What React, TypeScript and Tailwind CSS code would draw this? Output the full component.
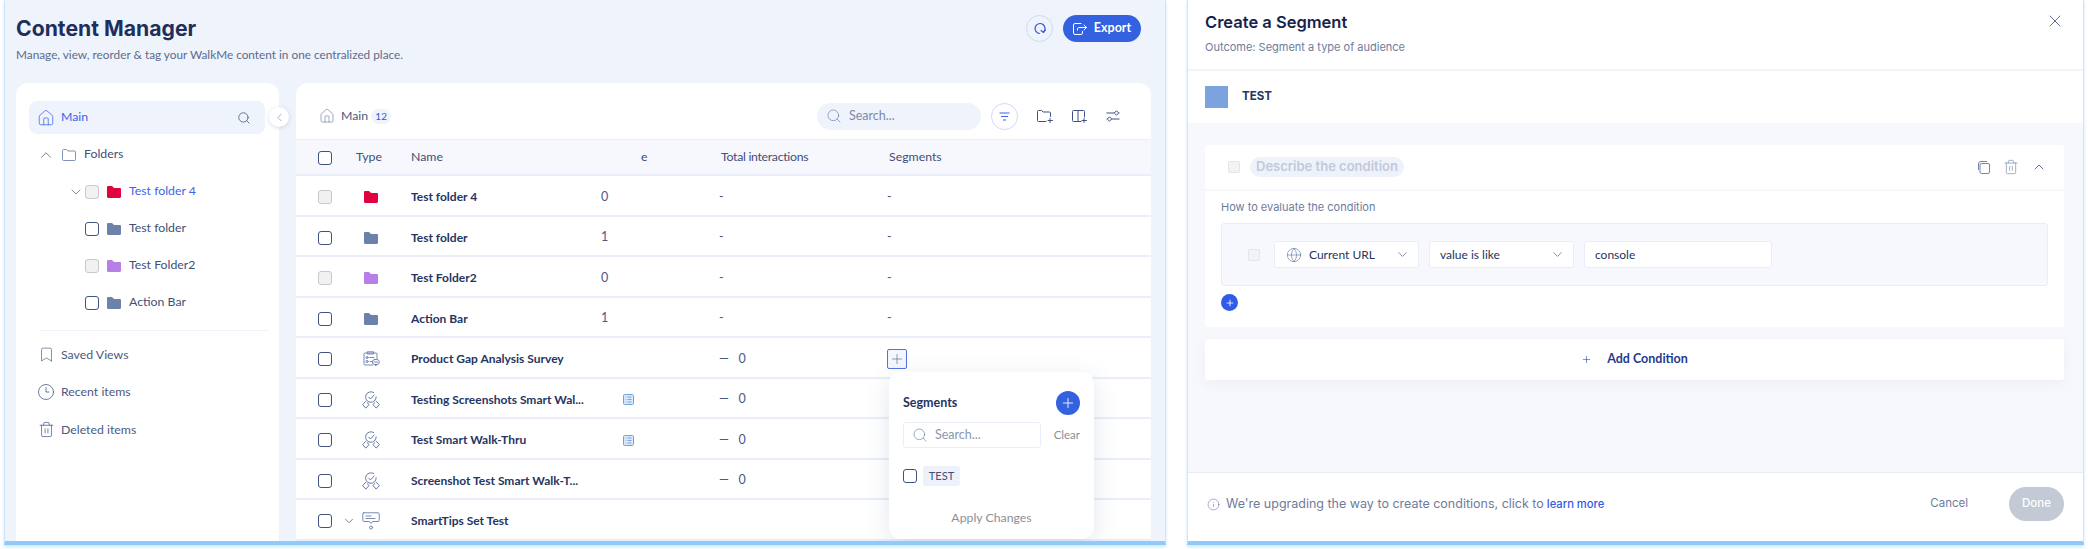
import React from "react";
import { House, Search, ChevronLeft, ChevronUp, ChevronDown, Bookmark, Clock3, Trash2, Plus, Globe, X, Info } from "lucide-react";

const body = "font-['Lato','Noto_Sans',sans-serif]";
const head = "font-['Inter','Noto_Sans',sans-serif]";

function FolderFill({ c }: { c: string }) {
  return (
    <svg width="14" height="12" viewBox="0 0 14 12" className="shrink-0">
      <path d="M0 1.2C0 .5.5 0 1.2 0h3.4c.4 0 .7.2 1 .5L7 2h5.8c.7 0 1.2.5 1.2 1.2v7.6c0 .7-.5 1.2-1.2 1.2H1.2C.5 12 0 11.500 0 10.800z" fill={c} />
    </svg>
  );
}

function Check({ off }: { off?: boolean }) {
  return (
    <span className={off ? "block w-[14px] h-[14px] shrink-0 rounded-[3px] border border-[#c9c9c9] bg-[#f1f1f1]" : "block w-[14px] h-[14px] shrink-0 rounded-[3px] border border-[#3f5280] bg-white"} />
  );
}

function Award() {
  return (
    <svg width="18" height="18" viewBox="0 0 17 17" fill="none" stroke="#5f739e" strokeWidth="0.9" strokeLinejoin="round" strokeLinecap="round">
      <path d="M11 1.400A5 5 0 1 0 13.400 5.500" />
      <path d="M6.300 5.800l1.700 1.700 3.500-3.800" />
      <path d="M3.800 9.500L.6 12.800l3 3.400 2.900-3.200L5.200 11" />
      <path d="M13.200 9.500l3.200 3.300-3 3.400-2.900-3.200 1.300-2" />
    </svg>
  );
}

function Survey() {
  return (
    <svg width="17" height="17" viewBox="0 0 17 17" fill="none" stroke="#6a7ea8" strokeWidth="0.9" strokeLinejoin="round" strokeLinecap="round">
      <path d="M9.500 14H2a1 1 0 0 1-1-1V3a1 1 0 0 1 1-1h11a1 1 0 0 1 1 1v5" />
      <path d="M4.500.8h6v2.200h-6z" />
      <circle cx="4" cy="6.500" r="1.100" />
      <path d="M7 6.500h4" />
      <circle cx="4" cy="10.500" r="1.100" />
      <path d="M7 10.500h1.500" />
      <rect x="9.300" y="8.500" width="7" height="5" rx="2.500" />
      <path d="M12 13.500l.8 1.500.8-1.500M11 11h3.600" />
    </svg>
  );
}

function Tip() {
  return (
    <svg width="18" height="18" viewBox="0 0 18 18" fill="none" stroke="#6a7ea8" strokeWidth="0.9" strokeLinejoin="round" strokeLinecap="round">
      <path d="M1.800.8h14.400a1 1 0 0 1 1 1v6.700a1 1 0 0 1-1 1h-5.700L9 11.500 7.500 9.500H1.800a1 1 0 0 1-1-1V1.800a1 1 0 0 1 1-1z" />
      <path d="M4 4h5M4 6.500h9" />
      <circle cx="9" cy="15.500" r="1.500" />
    </svg>
  );
}

function Doc() {
  return (
    <svg width="11" height="11" viewBox="0 0 11 11" fill="none" className="shrink-0">
      <rect x=".5" y=".5" width="10" height="10" rx="1" fill="#dbe9fa" stroke="#6ea1dd" />
      <path d="M2.500 3h.8M4.500 3h4M2.500 5.500h.8M4.500 5.500h4M2.500 8h.8M4.500 8h4" stroke="#5d93d6" strokeWidth=".8" />
    </svg>
  );
}

function TreeFolder({ label, color, off, active, chevron }: { label: string; color: string; off?: boolean; active?: boolean; chevron?: boolean }) {
  return (
    <div className="h-[37px] flex items-center pl-[43px]">
      <span className="w-[13px] -ml-[3px] mr-[3px] shrink-0 flex justify-center">{chevron && <ChevronDown size={16} strokeWidth={1} className="shrink-0 text-[#3f5280]" />}</span>
      <Check off={off} />
      <span className="ml-[8px]"><FolderFill c={color} /></span>
      <span className={active ? "ml-[8px] text-[12.300px] text-[#3e63e8]" : "ml-[8px] text-[12.300px] text-[#3f4f78]"}>{label}</span>
    </div>
  );
}

function NavItem({ icon, label }: { icon: React.ReactNode; label: string }) {
  return (
    <div className="h-[37.500px] flex items-center pl-[10px]">
      <span className="w-[14px] flex justify-center">{icon}</span>
      <span className="ml-[8px] text-[12.300px] text-[#4a5a82]">{label}</span>
    </div>
  );
}

const rows: { name: string; icon: React.ReactNode; count?: string; off?: boolean; interactions: string; seg?: string; doc?: boolean; caret?: boolean; plus?: boolean }[] = [
  { name: "Test folder 4", icon: <FolderFill c="#e0033f" />, count: "0", off: true, interactions: "-", seg: "-" },
  { name: "Test folder", icon: <FolderFill c="#6d82ab" />, count: "1", interactions: "-", seg: "-" },
  { name: "Test Folder2", icon: <FolderFill c="#b87fe6" />, count: "0", off: true, interactions: "-", seg: "-" },
  { name: "Action Bar", icon: <FolderFill c="#6d82ab" />, count: "1", interactions: "-", seg: "-" },
  { name: "Product Gap Analysis Survey", icon: <Survey />, interactions: "—   0", plus: true },
  { name: "Testing Screenshots Smart Wal...", icon: <Award />, doc: true, interactions: "—   0" },
  { name: "Test Smart Walk-Thru", icon: <Award />, doc: true, interactions: "—   0" },
  { name: "Screenshot Test Smart Walk-T...", icon: <Award />, interactions: "—   0" },
  { name: "SmartTips Set Test", icon: <Tip />, caret: true, interactions: "" },
];

function Row({ r }: { r: (typeof rows)[number] }) {
  return (
    <div className="h-[40.500px] shrink-0 flex items-center pt-[4px] border-b-2 border-[#e9eefa] bg-white text-[12.500px]">
      <span className="ml-[22px]"><Check off={r.off} /></span>
      <span className="w-[16px] ml-[9px] flex justify-center">{r.caret && <ChevronDown size={14} strokeWidth={1.200} className="shrink-0 text-[#3f5280]" />}</span>
      <span className="w-[24px] ml-[2px] flex justify-center">{r.icon}</span>
      <span className="ml-[28px] w-[190px] truncate text-[12px] font-bold text-[#25355f] whitespace-nowrap">{r.name}</span>
      <span className="w-[118px] flex items-center text-[#4a5a82]">
        {r.count && <span>{r.count}</span>}
        {r.doc && <span className="ml-[22px]"><Doc /></span>}
      </span>
      <span className="w-[168px] text-[#4a5a82] whitespace-pre">{r.interactions}</span>
      <span className="text-[#4a5a82]">
        {r.seg}
        {r.plus && (
          <span className="flex w-[20px] h-[20px] items-center justify-center rounded-[2px] border border-[#5472e4] bg-[#f3f6fd]">
            <Plus size={16} strokeWidth={1} className="text-[#5a6c94]" />
          </span>
        )}
      </span>
    </div>
  );
}

export default function App() {
  return (
    <div className={`${body} w-[2088px] h-[549px] bg-white overflow-hidden flex pl-[4px] gap-[21px]`}>
      <div className="w-[1162px] h-[545px] shrink-0 flex flex-col overflow-hidden bg-[#eff3fb] border-b-[4px] border-b-[#8ecafc] border-l border-l-[#cfe5fc] border-r border-r-[#cfe5fc] shadow-[0_2px_3px_#cfe8ff]">
        <div className="h-[83px] shrink-0 flex justify-between pl-[11px] pr-[24px]">
          <div>
            <h1 className={`${head} mt-[15px] text-[21.200px] leading-[26px] font-bold text-[#1f2f5c]`}>Content Manager</h1>
            <p className="mt-[6px] text-[11.800px] leading-[16px] text-[#5c6b8e]">Manage, view, reorder &amp; tag your WalkMe content in one centralized place.</p>
          </div>
          <div className="flex gap-[10px] pt-[15px]">
            <span className="flex w-[27px] h-[27px] items-center justify-center rounded-full border border-[#cfd9f5]">
              <svg width="13" height="13" viewBox="0 0 13 13" fill="none" stroke="#3559dd" strokeWidth="1.200" strokeLinecap="round" strokeLinejoin="round">
                <path d="M10 2.500A5 5 0 1 0 6.500 11.500" />
                <path d="M8 8.500l2.500 2 2-2.500" />
                <path d="M10 2.500a5 5 0 0 1 .6 7.500" />
              </svg>
            </span>
            <span className="flex w-[78px] h-[27px] items-center justify-center gap-[7px] rounded-full bg-[#3361e0] text-white text-[12.500px] font-bold">
              <svg width="14" height="12" viewBox="0 0 14 12" fill="none" stroke="#fff" strokeWidth="1" strokeLinejoin="round" strokeLinecap="round">
                <path d="M9.500 8.500V10a1.500 1.500 0 0 1-1.500 1.500H2A1.500 1.500 0 0 1 .5 10V2A1.500 1.500 0 0 1 2 .5h6" />
                <path d="M4.500 7V6c0-1 .8-1.500 1.500-1.500h7.500M11 2l2.500 2.500L11 7" />
              </svg>
              Export
            </span>
          </div>
        </div>
        <div className="flex flex-1 min-h-0 pl-[11px]">
          <div className="relative w-[263px] shrink-0 rounded-t-[12px] bg-white pt-[18px] pl-[13px] pr-[14px]">
            <div className="h-[33px] flex items-center rounded-[8px] bg-[#eff3fb] pl-[8px] pr-[14px] w-[236px] text-[#3e63e8]">
              <House size={18} strokeWidth={1} />
              <span className="ml-[6px] text-[12.300px]">Main</span>
              <Search size={14} strokeWidth={1.200} className="ml-auto text-[#2f426c]" />
            </div>
            <div className="h-[37px] mt-[2px] flex items-center pl-[8px]">
              <ChevronUp size={18} strokeWidth={1} className="text-[#3f5280]" />
              <svg width="14" height="12" viewBox="0 0 14 12" fill="none" stroke="#7286ad" strokeWidth=".9" className="ml-[7px]">
                <path d="M.5 1.500a1 1 0 0 1 1-1h3l1.500 1.500h6.500a1 1 0 0 1 1 1v7.500a1 1 0 0 1-1 1h-11a1 1 0 0 1-1-1z" />
              </svg>
              <span className="ml-[8px] text-[12.300px] text-[#3f4f78]">Folders</span>
            </div>
            <TreeFolder label="Test folder 4" color="#e0033f" off active chevron />
            <TreeFolder label="Test folder" color="#6d82ab" />
            <TreeFolder label="Test Folder2" color="#b87fe6" off />
            <TreeFolder label="Action Bar" color="#6d82ab" />
            <div className="ml-[10px] mt-[9px] mb-[5px] h-px w-[230px] bg-[#eff2fa]" />
            <NavItem icon={<Bookmark size={17} strokeWidth={.9} className="shrink-0 text-[#3f5280]" />} label="Saved Views" />
            <NavItem icon={<Clock3 size={18} strokeWidth={1} className="shrink-0 text-[#3f5280]" />} label="Recent items" />
            <NavItem icon={<Trash2 size={17} strokeWidth={1} className="shrink-0 text-[#3f5280]" />} label="Deleted items" />
            <span className="absolute right-[-10px] top-[24px] flex w-[20px] h-[20px] items-center justify-center rounded-full bg-white shadow-[0_1px_4px_rgba(60,80,130,.2)]">
              <ChevronLeft size={13} strokeWidth={1} className="text-[#5a6c94]" />
            </span>
          </div>
          <div className="relative ml-[17px] w-[855px] shrink-0 flex flex-col rounded-t-[12px] bg-white overflow-visible">
            <div className="h-[57px] shrink-0 flex items-center border-b border-[#e9eefa] pt-[10px] pl-[23px] pr-[31px]">
              <House size={16} strokeWidth={1} className="text-[#6a7ea8]" />
              <span className="ml-[6px] text-[12.300px] text-[#4a5a82]">Main</span>
              <span className="ml-[3px] flex w-[20px] h-[15px] items-center justify-center rounded-full bg-[#eff3fb] text-[10px] text-[#3559dd]">12</span>
              <span className="ml-auto flex w-[164px] h-[27px] items-center rounded-full bg-[#eff3fb] pl-[9px] text-[12.500px] text-[#7d8aa8]">
                <Search size={16} strokeWidth={1} className="text-[#6a7ea8]" />
                <span className="ml-[7px]">Search...</span>
              </span>
              <span className="ml-[10px] flex w-[27px] h-[27px] items-center justify-center rounded-full border border-[#cfd9f5]">
                <svg width="11" height="9" viewBox="0 0 11 9" fill="none" stroke="#3e63e8" strokeWidth="1"><path d="M.5 1h10M2 4.500h7M4 8h3" /></svg>
              </span>
              <svg width="16" height="13" viewBox="0 0 16 13" fill="none" stroke="#3f5280" strokeWidth="1" strokeLinecap="round" className="ml-[19px]">
                <path d="M9 11.500H1.500a1 1 0 0 1-1-1v-9a1 1 0 0 1 1-1h3L6 2h6.500a1 1 0 0 1 1 1v3.500M13 8.500v4M11 10.500h4.500" />
              </svg>
              <svg width="15" height="13" viewBox="0 0 15 13" fill="none" stroke="#3f5280" strokeWidth="1" strokeLinecap="round" className="ml-[19px]">
                <path d="M9 11.500H1.500a1 1 0 0 1-1-1v-9a1 1 0 0 1 1-1h10a1 1 0 0 1 1 1V7M6 .5v11M12 8.500v4M10 10.500h4.500" />
              </svg>
              <svg width="14" height="12" viewBox="0 0 14 12" fill="none" stroke="#3f5280" strokeWidth="1" className="ml-[19px]">
                <path d="M.5 3H8.300M12.700 3h.8M.5 9h.8M5.700 9h7.800" /><path d="M10.500.8L12.700 3l-2.200 2.200L8.300 3zM3.500 6.800L5.700 9l-2.200 2.200L1.300 9z" />
              </svg>
            </div>
            <div className="h-[36px] shrink-0 flex items-center pt-[1px] border-b-2 border-[#e9eefa] bg-[#f7f8fd] text-[12.300px] text-[#3f4f78]">
              <span className="ml-[22px]"><Check /></span>
              <span className="ml-[24px] w-[55px]">Type</span>
              <span className="w-[230px]">Name</span>
              <span className="w-[80px]">e</span>
              <span className="w-[168px] tracking-[-0.3px]">Total interactions</span>
              <span>Segments</span>
            </div>
            {rows.map((r) => <Row key={r.name} r={r} />)}
            <div className="absolute left-[593px] top-[289px] w-[205px] h-[167px] rounded-[12px] bg-white shadow-[0_6px_24px_rgba(60,80,130,.14)] px-[14px] pt-[19px]">
              <div className="flex items-center justify-between">
                <span className="text-[12.500px] font-bold text-[#25355f]">Segments</span>
                <span className="flex w-[24px] h-[24px] items-center justify-center rounded-full bg-[#3361e0]">
                  <Plus size={16} strokeWidth={1.300} className="text-white" />
                </span>
              </div>
              <div className="mt-[7px] flex items-center justify-between">
                <span className="flex w-[138px] h-[26px] items-center rounded-[3px] border border-[#e9eefa] pl-[8px] text-[12.500px] text-[#8a96b0]">
                  <Search size={16} strokeWidth={1} className="text-[#6a7ea8]" />
                  <span className="ml-[7px]">Search...</span>
                </span>
                <span className="text-[11.500px] text-[#8c8f96]">Clear</span>
              </div>
              <div className="mt-[18px] flex items-center">
                <Check />
                <span className="ml-[6px] flex w-[37px] h-[20px] items-center justify-center rounded-[3px] bg-[#eff1fa] text-[11px] text-[#3f4f78]">TEST</span>
              </div>
              <div className="mt-[23px] text-center text-[12.300px] text-[#8c8f96]">Apply Changes</div>
            </div>
          </div>
        </div>
      </div>

      <div className={`${head} w-[897px] h-[545px] shrink-0 flex flex-col overflow-hidden bg-white border-b-[4px] border-b-[#8ecafc] border-l border-l-[#cfe5fc] border-r border-r-[#cfe5fc] shadow-[0_2px_3px_#cfe8ff]`}>
        <div className="h-[71px] shrink-0 border-b-2 border-[#f3f4f8] flex justify-between pl-[17px] pr-[18px]">
          <div>
            <h2 className="mt-[11px] text-[16.500px] leading-[22px] font-semibold text-[#16244d]">Create a Segment</h2>
            <p className="mt-[6px] text-[11px] leading-[16px] text-[#6f7b9b]">Outcome: Segment a type of audience</p>
          </div>
          <X size={20} strokeWidth={.9} className="mt-[11px] text-[#2f426c]" />
        </div>
        <div className="h-[52px] shrink-0 flex items-center pl-[17px]">
          <span className="w-[23px] h-[22px] bg-[#7ba3dd]" />
          <span className="ml-[14px] text-[11.500px] font-bold text-[#25355f]">TEST</span>
        </div>
        <div className="flex-1 min-h-0 bg-[#f7f8fc] px-[17px] pt-[22px]">
          <div className="w-[859px] h-[44px] flex items-center rounded-t-[3px] bg-white pl-[23px] pr-[17px]">
            <span className="w-[12px] h-[12px] rounded-[2px] border border-[#e4e5ea] bg-[#f3f3f5]" />
            <span className="ml-[10px] flex w-[154px] h-[20px] items-center justify-center rounded-full bg-[#eef2fb] text-[13px] font-semibold text-[#c3c9da]">Describe the condition</span>
            <svg width="12" height="13" viewBox="0 0 12 13" fill="none" stroke="#7286ad" strokeWidth="1" className="ml-auto">
              <rect x="2" y="2.500" width="9.500" height="10" rx="1.500" /><path d="M.5 9V3a2.500 2.500 0 0 1 2.500-2.500h6" />
            </svg>
            <Trash2 size={16} strokeWidth={1} className="ml-[13px] text-[#7286ad]" />
            <ChevronUp size={16} strokeWidth={1.200} className="ml-[12px] text-[#3f5280]" />
          </div>
          <div className="w-[859px] h-[136px] mt-[2px] bg-white pl-[16px] pr-[16px] pt-[8px]">
            <div className="text-[11px] leading-[16px] text-[#6f7b9b]">How to evaluate the condition</div>
            <div className="mt-[8px] h-[63px] flex items-center rounded-[3px] border border-[#e9edf8] bg-[#f7f8fd] pl-[26px]">
              <span className="w-[12px] h-[12px] rounded-[2px] border border-[#e4e5ea] bg-[#f3f3f5]" />
              <span className={`${body} ml-[14px] flex w-[145px] h-[27px] items-center rounded-[3px] border border-[#e9edf8] bg-white pl-[11px] pr-[8px] text-[12px] text-[#25355f]`}>
                <Globe size={16} strokeWidth={.9} className="text-[#5a6f9c]" />
                <span className="ml-[7px]">Current URL</span>
                <ChevronDown size={15} strokeWidth={1} className="ml-auto text-[#3f5280]" />
              </span>
              <span className={`${body} ml-[10px] flex w-[145px] h-[27px] items-center rounded-[3px] border border-[#e9edf8] bg-white pl-[10px] pr-[8px] text-[12px] text-[#25355f]`}>
                value is like
                <ChevronDown size={15} strokeWidth={1} className="ml-auto text-[#3f5280]" />
              </span>
              <span className={`${body} ml-[10px] flex w-[188px] h-[27px] items-center rounded-[3px] border border-[#e9edf8] bg-white pl-[10px] text-[12px] text-[#25355f]`}>console</span>
            </div>
            <span className="mt-[8px] flex w-[17px] h-[17px] items-center justify-center rounded-full bg-[#2f5be8]">
              <Plus size={10} strokeWidth={2} className="text-white" />
            </span>
          </div>
          <div className={`${body} w-[859px] h-[41px] mt-[12px] flex items-center justify-center rounded-[3px] bg-white shadow-[0_4px_12px_rgba(60,80,130,.05)] text-[12.500px] font-bold text-[#1f3a8f]`}>
            <Plus size={11} strokeWidth={1.200} className="text-[#1f3a8f]" />
            <span className="ml-[15px]">Add Condition</span>
          </div>
        </div>
        <div className="h-[69px] shrink-0 flex items-center pb-[6px] border-t border-[#e9ebf2] pl-[19px] pr-[19px] text-[12.500px]">
          <Info size={13} strokeWidth={1} className="text-[#5a6f9c]" />
          <span className="ml-[6px] text-[#6f7b9b]">We&apos;re upgrading the way to create conditions, click to</span>
          <span className="ml-[3px] text-[11.200px] font-medium text-[#2f5be8]">learn more</span>
          <span className="ml-auto text-[11.500px] text-[#6f7b9b]">Cancel</span>
          <span className="ml-[41px] flex w-[55px] h-[34px] items-center justify-center rounded-full bg-[#c4c9d6] text-[11.500px] font-medium text-white">Done</span>
        </div>
      </div>
    </div>
  );
}
